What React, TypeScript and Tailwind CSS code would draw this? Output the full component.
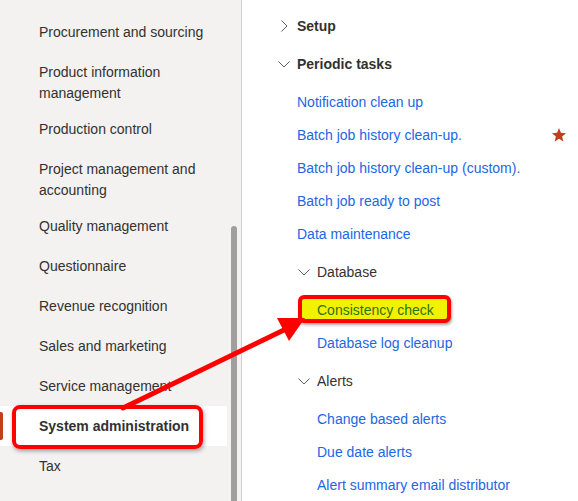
import React from "react";

const font = { fontFamily: '"Liberation Sans", Arial, sans-serif' };

function ChevronRight() {
  return (
    <svg width="12" height="12" viewBox="0 0 12 12" className="shrink-0">
      <path d="M3.5 0.5 L9 6 L3.5 11.5" fill="none" stroke="#605e5c" strokeWidth="1" />
    </svg>
  );
}

function ChevronDown() {
  return (
    <svg width="12" height="12" viewBox="0 0 12 12" className="shrink-0">
      <path d="M0.5 3.5 L6 9 L11.5 3.5" fill="none" stroke="#605e5c" strokeWidth="1" />
    </svg>
  );
}

function Star() {
  return (
    <svg width="16" height="16" viewBox="0 0 24 24">
      <path
        d="M12 1.5 L14.9 8.6 L22.5 9.2 L16.7 14.1 L18.5 21.6 L12 17.6 L5.5 21.6 L7.3 14.1 L1.5 9.2 L9.1 8.6 Z"
        fill="#c43e1c"
      />
    </svg>
  );
}

type NavItem = { label: string; lines?: number; selected?: boolean };

const navItems: NavItem[] = [
  { label: "Procurement and sourcing" },
  { label: "Product information management", lines: 2 },
  { label: "Production control" },
  { label: "Project management and accounting", lines: 2 },
  { label: "Quality management" },
  { label: "Questionnaire" },
  { label: "Revenue recognition" },
  { label: "Sales and marketing" },
  { label: "Service management" },
  { label: "System administration", selected: true },
  { label: "Tax" },
];

function Header({ label, level, open }: { label: string; level: 1 | 2; open: boolean }) {
  return (
    <div
      className={
        "flex h-[38px] items-center gap-[7px] text-[14px] text-[#323130] " +
        (level === 1 ? "pl-[36px] font-semibold" : "pl-[56px]")
      }
    >
      {open ? <ChevronDown /> : <ChevronRight />}
      <span>{label}</span>
    </div>
  );
}

function Link({ label, level, star }: { label: string; level: 1 | 2; star?: boolean }) {
  return (
    <div
      className={
        "flex h-[33px] items-center pr-[11px] text-[14px] text-[#2266e3] " +
        (level === 1 ? "pl-[55px]" : "pl-[75px]")
      }
    >
      <span>{label}</span>
      {star && (
        <span className="ml-auto flex">
          <Star />
        </span>
      )}
    </div>
  );
}

export default function App() {
  return (
    <div className="relative flex h-[501px] w-[578px] overflow-hidden bg-white" style={font}>
      {/* Left navigation */}
      <aside className="relative h-full w-[242px] shrink-0 border-r border-[#d2d0ce] bg-[#f3f2f1]">
        <div className="w-[227px] pt-[12px]">
          {navItems.map((it) =>
            it.lines === 2 ? (
              <div
                key={it.label}
                className="h-[57px] pl-[39px] pr-[20px] pt-[10px] text-[14px] leading-[21px] text-[#323130]"
              >
                {it.label}
              </div>
            ) : (
              <div
                key={it.label}
                className={
                  "relative flex h-[40px] items-center pl-[39px] text-[14px] text-[#323130] " +
                  (it.selected ? "bg-white font-semibold text-[#201f1e]" : "")
                }
              >
                {it.selected && (
                  <span className="absolute left-0 top-[6px] h-[28px] w-[3px] rounded-r-[2px] bg-[#c43e1c]" />
                )}
                {it.label}
              </div>
            )
          )}
        </div>
        {/* scrollbar thumb */}
        <div className="absolute left-[231px] top-[226px] h-[290px] w-[6px] rounded-t-[3px] bg-[#a19f9d]" />
      </aside>

      {/* Right content */}
      <main className="flex-1 pt-[7px]">
        <Header label="Setup" level={1} open={false} />
        <Header label="Periodic tasks" level={1} open={true} />
        <div className="py-[2.5px]">
          <Link label="Notification clean up" level={1} />
          <Link label="Batch job history clean-up." level={1} star />
          <Link label="Batch job history clean-up (custom)." level={1} />
          <Link label="Batch job ready to post" level={1} />
          <Link label="Data maintenance" level={1} />
        </div>
        <Header label="Database" level={2} open={true} />
        <div className="py-[2.5px]">
          <div className="flex h-[33px] items-center pl-[75px] text-[14px] text-[#2f7414]">
            <span>Consistency check</span>
          </div>
          <Link label="Database log cleanup" level={2} />
        </div>
        <Header label="Alerts" level={2} open={true} />
        <div className="py-[2.5px]">
          <Link label="Change based alerts" level={2} />
          <Link label="Due date alerts" level={2} />
          <Link label="Alert summary email distributor" level={2} />
        </div>
      </main>

      {/* Annotation: highlight behind Consistency check */}
      <div className="pointer-events-none absolute left-[298px] top-[295px] h-[28px] w-[153px] rounded-[6px] border-[4px] border-[#ff0000] bg-[#f2f200] shadow-[1px_2px_3px_rgba(0,0,0,0.35)]" />
      <div className="pointer-events-none absolute left-[317px] top-[293.5px] flex h-[33px] items-center text-[14px] text-[#2f7414]">
        Consistency check
      </div>

      {/* Annotation: box around System administration */}
      <div className="pointer-events-none absolute left-[12px] top-[405px] h-[44px] w-[191px] rounded-[8px] border-[4px] border-[#ff0000] shadow-[1px_2px_4px_rgba(0,0,0,0.35)]" />

      {/* Annotation: arrow */}
      <svg className="pointer-events-none absolute left-0 top-0" width="578" height="501" viewBox="0 0 578 501">
        <line x1="123" y1="408" x2="286" y2="329" stroke="#ff0000" strokeWidth="5" strokeLinecap="round" />
        <polygon points="305,318 289,341 277,318" fill="#ff0000" />
      </svg>
    </div>
  );
}
